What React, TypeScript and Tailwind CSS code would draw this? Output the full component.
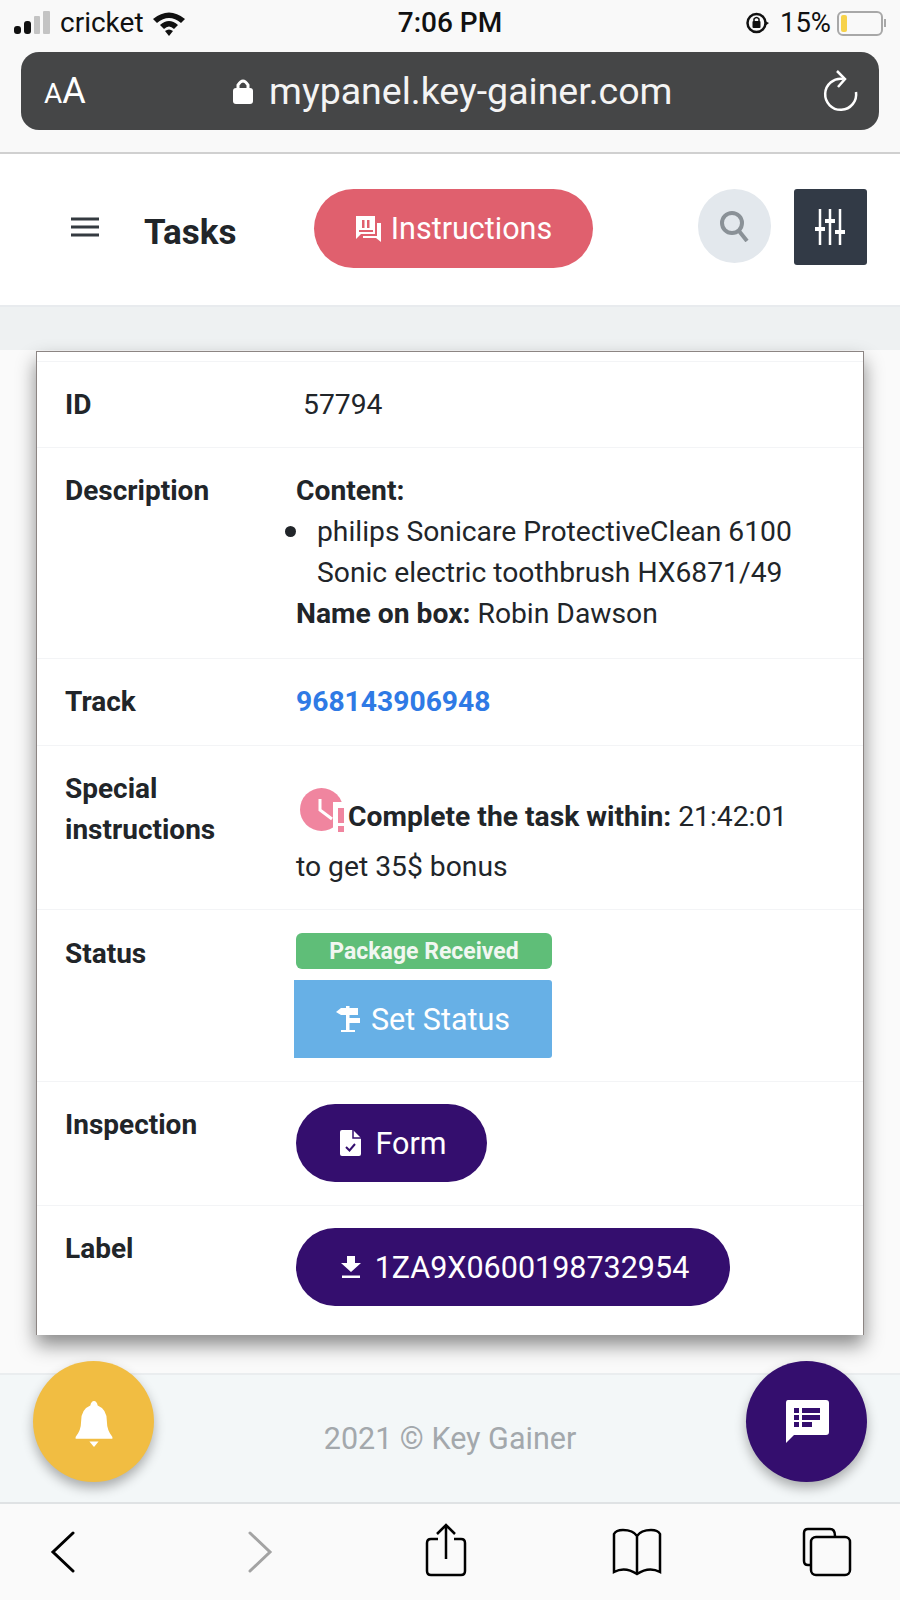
const sans = "font-['Roboto',sans-serif]";

const Row = ({ label, className, children }: { label: string; className: string; children: React.ReactNode }) => (
  <div className={`flex border-b border-[#f3f4f6] ${className}`}>
    <div className="w-[259px] shrink-0 pl-[28px] text-[28px] leading-[41px] font-bold text-[#212529]">{label}</div>
    <div className="min-w-0 flex-1 text-[28.25px] leading-[41px] text-[#212529]">{children}</div>
  </div>
);

const PurpleButton = ({ className, children }: { className: string; children: React.ReactNode }) => (
  <div className={`flex h-[78px] items-center justify-center gap-[14px] rounded-full bg-[#340e6e] pl-[4px] text-[30.5px] text-white ${className}`}>
    {children}
  </div>
);

const Fab = ({ className, children }: { className: string; children: React.ReactNode }) => (
  <div className={`absolute top-[1361px] flex h-[121px] w-[121px] items-center justify-center rounded-full shadow-[0_6px_12px_rgba(0,0,0,0.3)] ${className}`}>
    {children}
  </div>
);

export default function App() {
  return (
    <div className={`relative h-[1600px] w-[900px] overflow-hidden bg-white ${sans}`}>
      {/* ios status bar */}
      <div className="bg-[#f9f9f9]">
        <div className="flex h-[52px] items-center justify-between pr-[14px] pb-[6px] pl-[14px]">
          <div className="flex w-[300px] items-center">
            <svg width="37" height="24" viewBox="0 0 37 24">
              <rect x="0" y="15" width="7" height="8" rx="3" fill="#111" />
              <rect x="10" y="10" width="7" height="13" rx="3" fill="#111" />
              <rect x="20" y="5" width="6" height="18" rx="1" fill="#c4c4c4" />
              <rect x="29" y="0" width="7" height="23" rx="1" fill="#c4c4c4" />
            </svg>
            <span className="ml-[9px] text-[28px] text-[#111]">cricket</span>
            <svg className="ml-[8px]" width="34" height="26" viewBox="0 0 34 26">
              <path d="M1 9 Q17 -4 33 9 L29 13 Q17 3 5 13Z M8 15 Q17 7 26 15 L22 19 Q17 14 12 19Z M17 26 L13 21 Q17 18 21 21Z" fill="#111" />
            </svg>
          </div>
          <span className="text-[28px] font-medium text-[#111]">7:06 PM</span>
          <div className="flex w-[300px] items-center justify-end">
            <svg width="24" height="26" viewBox="0 0 24 26">
              <circle cx="11.5" cy="13" r="9" fill="none" stroke="#111" strokeWidth="2.5" />
              <rect x="7.5" y="11" width="8" height="7" rx="1" fill="#111" />
              <path d="M9 11 V9 Q11.5 6 14 9 V11" fill="none" stroke="#111" strokeWidth="1.5" />
              <path d="M20 11 L24 13 L20 16Z" fill="#111" />
            </svg>
            <span className="ml-[11px] text-[27.5px] text-[#111]">15%</span>
            <div className="ml-[6px] h-[25px] w-[46px] rounded-[6px] border-2 border-[#a8a8a8] p-[2px]">
              <div className="h-full w-[6px] rounded-[2px] bg-[#f7d24a]" />
            </div>
            <div className="ml-[1px] h-[8px] w-[2px] bg-[#a8a8a8]" />
          </div>
        </div>
        {/* safari address bar */}
        <div className="px-[21px] pb-[22px]">
          <div className="flex h-[78px] items-center rounded-[18px] bg-[#454647] pr-[20px] pl-[23px] text-white">
            <span className="w-[178px] text-[36px]">
              <span className="text-[28px]">A</span>A
            </span>
            <svg width="20" height="28" viewBox="0 0 20 28" className="ml-[11px]">
              <path d="M5 12 V8 Q10 0 15 8 V12" fill="none" stroke="white" strokeWidth="3" />
              <rect x="0" y="11" width="20" height="16" rx="3" fill="white" />
            </svg>
            <span className="ml-[16px] text-[37.5px] text-[#f4f4f4]">mypanel.key-gainer.com</span>
            <svg className="ml-auto" width="36" height="42" viewBox="0 0 36 42">
              <path d="M20 9 A15.5 15.5 0 1 0 33 22" fill="none" stroke="white" strokeWidth="2.5" />
              <path d="M14 1 L22 9 L15 17" fill="none" stroke="white" strokeWidth="2.5" />
            </svg>
          </div>
        </div>
      </div>

      {/* page header */}
      <div className="flex h-[153px] items-start border-t-2 border-[#d0d0d0] pt-[35px]">
        <svg className="mt-[28px] ml-[71px]" width="28" height="20" viewBox="0 0 28 20">
          <path d="M0 2 H28 M0 10 H28 M0 18 H28" stroke="#343a40" strokeWidth="3" />
        </svg>
        <span className="mt-[22px] ml-[45px] text-[35px] leading-[44px] font-bold text-[#212529]">Tasks</span>
        <div className="ml-[77px] flex h-[79px] w-[279px] items-center justify-center gap-[9px] rounded-full bg-[#e0606e] text-[30.5px] text-white">
          <svg width="28" height="28" viewBox="0 0 28 28">
            <path d="M2 1 H21 V19 H7 L2 24Z" fill="white" />
            <path d="M23 8 H27 V27 L22 23 H9 V21 H23Z" fill="white" />
            <rect x="8" y="5" width="2.5" height="8" fill="#e0606e" />
            <rect x="13" y="5" width="2.5" height="8" fill="#e0606e" />
            <rect x="5" y="15" width="14" height="2" fill="#e0606e" />
          </svg>
          Instructions
        </div>
        <div className="ml-[105px] flex h-[74px] w-[73px] items-center justify-center rounded-full bg-[#e3e8ed]">
          <svg width="30" height="32" viewBox="0 0 30 32">
            <circle cx="13" cy="13" r="10" fill="none" stroke="#8a9197" strokeWidth="4" />
            <path d="M20 21 L28 31" stroke="#8a9197" strokeWidth="4" />
          </svg>
        </div>
        <div className="ml-[23px] flex h-[76px] w-[73px] items-center justify-center rounded-[3px] bg-[#323a46]">
          <svg width="30" height="36" viewBox="0 0 30 36">
            <path d="M5 0 V36 M15 0 V36 M25 0 V36" stroke="white" strokeWidth="2.5" />
            <path d="M0 20 H10 M10 12 H20 M20 23 H30" stroke="white" strokeWidth="4" />
          </svg>
        </div>
      </div>

      {/* content */}
      <div className="h-[1068px] border-t-2 border-[#e8ebee] bg-[linear-gradient(#eef1f2_43px,#fafafa_43px)] px-[36px] pt-[44px]">
        <div className="border border-b-0 border-[#8c8583] bg-white pt-[9px] shadow-[0_10px_18px_rgba(0,0,0,0.45)]">
          <Row label="ID" className="h-[87px] items-start border-t pt-[22px]">
            <span className="ml-[7px]">57794</span>
          </Row>
          <Row label="Description" className="h-[211px] pt-[22px]">
            <div className="font-bold">Content:</div>
            <div className="flex">
              <span className="mt-[15px] ml-[-11px] h-[11px] w-[11px] shrink-0 rounded-full bg-[#212529]" />
              <span className="ml-[21px] w-[490px]">philips Sonicare ProtectiveClean 6100 Sonic electric toothbrush HX6871/49</span>
            </div>
            <div>
              <span className="font-bold">Name on box:</span> Robin Dawson
            </div>
          </Row>
          <Row label="Track" className="h-[87px] pt-[22px]">
            <span className="font-bold text-[#2f7ae5]">968143906948</span>
          </Row>
          <Row label="Special instructions" className="h-[164px] pt-[22px] [&>div:first-child]:pr-[40px]">
            <div className="mt-[19px] flex h-[50px] items-end">
              <svg width="44" height="44" viewBox="0 0 44 44" className="mb-[5px] ml-[4px] shrink-0">
                <circle cx="21.5" cy="21.5" r="21.5" fill="#f0859f" />
                <path d="M20 11 V22 L32 31" fill="none" stroke="white" strokeWidth="3" />
                <rect x="33" y="14" width="11" height="30" fill="white" />
                <rect x="38" y="20" width="6" height="15" fill="#f0859f" />
                <rect x="38" y="38" width="6" height="6" fill="#f0859f" />
              </svg>
              <span className="ml-[4px] font-bold whitespace-nowrap">Complete the task within:</span>
              <span className="ml-[7px] whitespace-nowrap">21:42:01</span>
            </div>
            <div className="mt-[9px]">to get 35$ bonus</div>
          </Row>
          <Row label="Status" className="h-[172px] pt-[23px]">
            <div className="flex h-[36px] w-[256px] items-center justify-center rounded-[6px] bg-[#5fbe78] text-[23px] font-bold text-[#f1f7f1]">
              Package Received
            </div>
            <div className="mt-[11px] ml-[-2px] flex h-[78px] w-[258px] items-center justify-center gap-[11px] rounded-r-[3px] bg-[#67b0e6] text-[30.5px] text-white">
              <svg width="24" height="26" viewBox="0 0 24 26">
                <path d="M10 0 H13.5 V24 H19 V26 H5 V24 H10Z" fill="white" />
                <path d="M0 6 L5 2 H22 V9 H5Z" fill="white" />
                <path d="M10 12 H24 V17 H10Z" fill="white" />
              </svg>
              Set Status
            </div>
          </Row>
          <Row label="Inspection" className="h-[124px] pt-[22px]">
            <PurpleButton className="w-[191px]">
              <svg width="21" height="26" viewBox="0 0 21 26">
                <path d="M2 0 H13 L21 8 V24 Q21 26 19 26 H2 Q0 26 0 24 V2 Q0 0 2 0Z" fill="white" />
                <path d="M13 0 V8 H21" fill="none" stroke="#340e6e" strokeWidth="1.5" />
                <path d="M6 17 L9.5 20.5 L15 14" fill="none" stroke="#340e6e" strokeWidth="2" />
              </svg>
              Form
            </PurpleButton>
          </Row>
          <Row label="Label" className="h-[129px] border-b-0 pt-[22px]">
            <PurpleButton className="w-[434px]">
              <svg width="20" height="22" viewBox="0 0 20 22">
                <path d="M6 0 H14 V7 H20 L10 16 L0 7 H6Z" fill="white" />
                <path d="M1 19.5 H19 V22 H1Z" fill="white" />
              </svg>
              1ZA9X0600198732954
            </PurpleButton>
          </Row>
        </div>
      </div>

      {/* footer */}
      <div className="absolute top-[1373px] left-0 flex h-[131px] w-full items-center justify-center border-y-2 border-t-[#eaedef] border-b-[#dfe2e4] bg-[#f3f7f8] text-[30.5px] text-[#a3a8ac]">
        2021 © Key Gainer
      </div>
      <Fab className="left-[33px] bg-[#f1bd42]">
        <svg width="40" height="46" viewBox="0 0 42 50" className="mt-[4px]">
          <path d="M21 0 Q24 0 25 5 Q35 9 35 22 Q35 32 41 39 V41 H1 V39 Q7 32 7 22 Q7 9 17 5 Q18 0 21 0Z" fill="white" />
          <path d="M16 44 H26 L21 50Z" fill="white" />
        </svg>
      </Fab>
      <Fab className="left-[746px] bg-[#340e6e]">
        <svg width="44" height="43" viewBox="0 0 44 43">
          <path d="M3 0 H41 Q44 0 44 3 V32 Q44 35 41 35 H9 L1 43 V3 Q1 0 3 0Z" fill="white" />
          <path d="M9 8 H14 V13 H9Z M17 8 H35 V13 H17Z M9 15 H14 V20 H9Z M17 15 H35 V20 H17Z M9 22 H14 V27 H9Z M17 22 H27 V27 H17Z" fill="#340e6e" />
        </svg>
      </Fab>

      {/* safari toolbar */}
      <div className="absolute top-[1504px] left-0 flex h-[96px] w-full items-center bg-[#fafafa]">
        <svg className="ml-[50px]" width="26" height="42" viewBox="0 0 26 42">
          <path d="M23 2 L3 21 L23 40" fill="none" stroke="#000" strokeWidth="3" strokeLinecap="round" />
        </svg>
        <svg className="ml-[171px]" width="26" height="42" viewBox="0 0 26 42">
          <path d="M3 2 L23 21 L3 40" fill="none" stroke="#a3a3a3" strokeWidth="3" strokeLinecap="round" />
        </svg>
        <svg className="mt-[-4px] ml-[152px]" width="42" height="54" viewBox="0 0 42 54">
          <path d="M13 16 H6 Q2 16 2 20 V48 Q2 52 6 52 H36 Q40 52 40 48 V20 Q40 16 36 16 H29" fill="none" stroke="#000" strokeWidth="2.5" />
          <path d="M21 36 V2 M12 11 L21 2 L30 11" fill="none" stroke="#000" strokeWidth="2.5" />
        </svg>
        <svg className="ml-[144px]" width="52" height="48" viewBox="0 0 52 48">
          <path d="M26 8 Q22 2 12 2 Q5 2 3 6 V44 Q14 38 26 46 Q38 38 49 44 V6 Q47 2 40 2 Q30 2 26 8 V46" fill="none" stroke="#000" strokeWidth="2.5" />
        </svg>
        <svg className="ml-[139px]" width="50" height="50" viewBox="0 0 50 50">
          <path d="M9 38 H6 Q2 38 2 34 V6 Q2 2 6 2 H28 Q33 2 33 9" fill="none" stroke="#000" strokeWidth="2.5" />
          <rect x="9" y="10" width="39" height="38" rx="5" fill="none" stroke="#000" strokeWidth="2.5" />
        </svg>
      </div>
    </div>
  );
}
